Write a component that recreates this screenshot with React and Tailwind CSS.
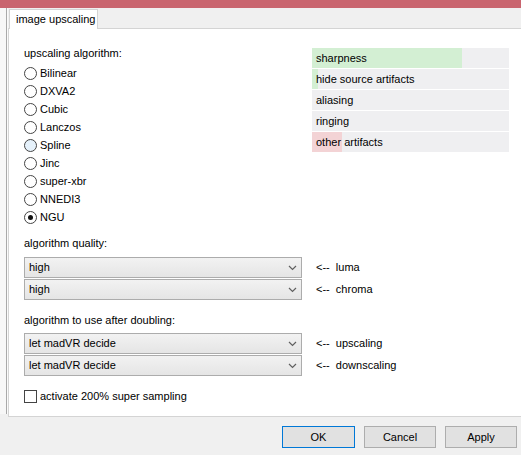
import { useState } from 'react';

const algorithms = ['Bilinear', 'DXVA2', 'Cubic', 'Lanczos', 'Spline', 'Jinc', 'super-xbr', 'NNEDI3', 'NGU'];

const bars = [
  { label: 'sharpness', fill: 150, color: 'bg-[#d3efd3]' },
  { label: 'hide source artifacts', fill: 6, color: 'bg-[#d3efd3]' },
  { label: 'aliasing', fill: 0, color: '' },
  { label: 'ringing', fill: 0, color: '' },
  { label: 'other artifacts', fill: 30, color: 'bg-[#f3d3d5]' },
];

const Chevron = () => (
  <svg width="9" height="6" viewBox="0 0 9 6" className="shrink-0">
    <path d="M1 1 L4.5 4.5 L8 1" fill="none" stroke="#606060" strokeWidth="1.2" />
  </svg>
);

const Select = ({ value }) => (
  <div className="w-[278px] h-[21px] border border-[#acacac] bg-gradient-to-b from-[#f2f2f2] to-[#e5e5e5] flex items-center justify-between pl-[4px] pr-[4px]">
    <span>{value}</span>
    <Chevron />
  </div>
);

const App = () => {
  const [algo, setAlgo] = useState('NGU');

  return (
    <div
      className="w-[521px] h-[455px] bg-[#f0f0f0] overflow-hidden text-[11px] text-black leading-none"
      style={{ fontFamily: '"Liberation Sans", Arial, sans-serif' }}
    >
      {/* title bar edge */}
      <div className="h-[8px] bg-[#c9656f]" />

      <div className="flex">
        {/* outer left edge */}
        <div className="w-[6px] h-[406px] bg-[#f7f7f7]" />
        <div className="w-[1px] h-[406px] bg-[#a9a9a9]" />
        <div className="w-[1px] h-[406px] bg-[#fafafa]" />

        <div className="flex-1 flex flex-col">
          {/* tab row */}
          <div className="h-[20px] flex items-end">
            <div className="ml-[1px] w-[89px] h-[20px] bg-white border border-b-0 border-[#d4d4d4] flex items-center pl-[6px] relative top-[1px]">
              image upscaling
            </div>
          </div>

          {/* panel */}
          <div className="h-[389px] bg-white border border-r-0 border-[#d4d4d4] pl-[15px] pt-[14px]">
            <div className="flex">
              <div className="w-[288px]">
                <div className="h-[20px] flex items-center">upscaling algorithm:</div>
                <div className="flex flex-col pt-[1px]">
                  {algorithms.map((a) => (
                    <div key={a} className="h-[18px] flex items-center cursor-default" onClick={() => setAlgo(a)}>
                      <div
                        className={`w-[13px] h-[13px] rounded-full border border-[#444] flex items-center justify-center ${
                          a === 'Spline' ? 'bg-[#e5f1fb]' : 'bg-white'
                        }`}
                      >
                        {algo === a && <div className="w-[5px] h-[5px] rounded-full bg-[#111]" />}
                      </div>
                      <span className="ml-[3px]">{a}</span>
                    </div>
                  ))}
                </div>
              </div>
              <div className="w-[197px] flex flex-col gap-[1px] pt-[5px]">
                {bars.map((b) => (
                  <div key={b.label} className="h-[20px] bg-[#efeff1] relative flex items-center">
                    {b.fill > 0 && (
                      <div className={`absolute left-0 top-0 bottom-0 ${b.color}`} style={{ width: b.fill }} />
                    )}
                    <span className="relative pl-[4px]">{b.label}</span>
                  </div>
                ))}
              </div>
            </div>

            <div className="mt-[9px] h-[16px] flex items-center">algorithm quality:</div>
            <div className="mt-[6px] flex flex-col gap-[1px]">
              <div className="flex items-center">
                <Select value="high" />
                <span className="ml-[14px]">&lt;--&nbsp;&nbsp;luma</span>
              </div>
              <div className="flex items-center">
                <Select value="high" />
                <span className="ml-[14px]">&lt;--&nbsp;&nbsp;chroma</span>
              </div>
            </div>

            <div className="mt-[12px] h-[16px] flex items-center">algorithm to use after doubling:</div>
            <div className="mt-[5px] flex flex-col gap-[1px]">
              <div className="flex items-center">
                <Select value="let madVR decide" />
                <span className="ml-[14px]">&lt;--&nbsp;&nbsp;upscaling</span>
              </div>
              <div className="flex items-center">
                <Select value="let madVR decide" />
                <span className="ml-[14px]">&lt;--&nbsp;&nbsp;downscaling</span>
              </div>
            </div>

            <div className="mt-[14px] flex items-center">
              <div className="w-[13px] h-[13px] border border-[#444] bg-white" />
              <span className="ml-[3px]">activate 200% super sampling</span>
            </div>
          </div>
        </div>
      </div>

      {/* dialog buttons */}
      <div className="flex justify-end gap-[9px] pr-[4px] mt-[9px]">
        <button className="w-[73px] h-[22px] bg-[#e1e1e1] border border-[#0078d7]">OK</button>
        <button className="w-[72px] h-[22px] bg-[#e1e1e1] border border-[#adadad]">Cancel</button>
        <button className="w-[72px] h-[22px] bg-[#e1e1e1] border border-[#adadad]">Apply</button>
      </div>
    </div>
  );
};

export default App;
